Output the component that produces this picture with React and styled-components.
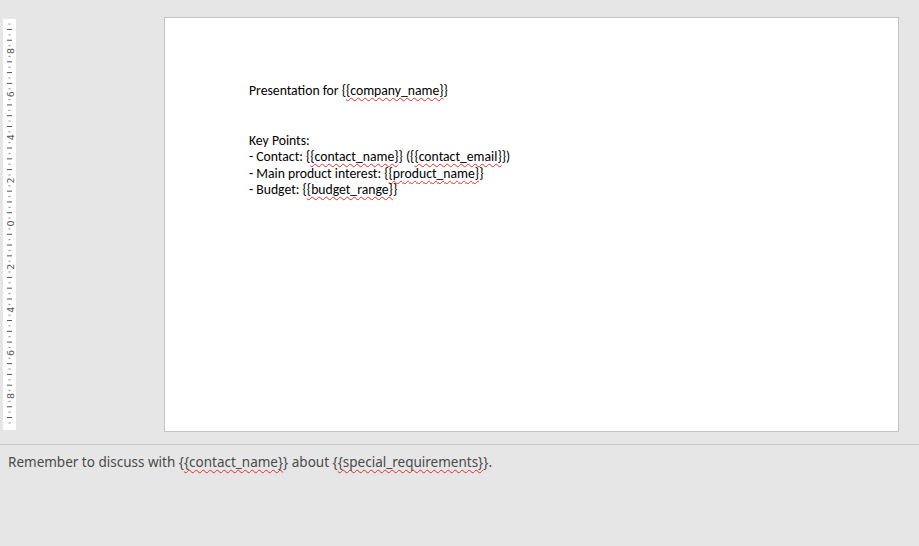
import React from 'react';
import styled, { createGlobalStyle } from 'styled-components';

const GlobalStyle = createGlobalStyle`
  html, body {
    margin: 0;
    padding: 0;
    background: #e6e6e6;
  }
  #root {
    width: 919px;
    height: 546px;
    overflow: hidden;
  }
`;

const Window = styled.div`
  display: flex;
  flex-direction: column;
  width: 919px;
  height: 546px;
  background: #e6e6e6;
`;

const EditorPane = styled.div`
  display: flex;
  align-items: flex-start;
  height: 445px;
  border-bottom: 1px solid #c8c8c8;
  box-sizing: border-box;
`;

const RulerStrip = styled.div`
  margin: 19px 0 0 3px;
  width: 13px;
  height: 411px;
  background: #ffffff;
`;

const SlideArea = styled.div`
  margin: 17px 0 0 148px;
`;

const Slide = styled.div`
  box-sizing: border-box;
  width: 735px;
  height: 415px;
  padding: 65px 0 0 84px;
  background: #ffffff;
  border: 1px solid #c3c3c3;
  font-family: Carlito, Lato, 'Liberation Sans', sans-serif;
  font-size: 13.7px;
  color: #000000;
`;

const SlideLine = styled.div`
  height: 16.5px;
  line-height: 16.5px;
  white-space: pre;
`;

const Misspelled = styled.span`
  text-decoration: underline wavy #e03030;
  text-decoration-thickness: 1px;
  text-underline-offset: 2px;
  text-decoration-skip-ink: none;
`;

const NotesPane = styled.div`
  flex: 1;
  padding: 7px 0 0 8px;
  font-family: 'Noto Sans', 'Open Sans', sans-serif;
  font-size: 13.5px;
  line-height: 20px;
  color: #4a4a4a;
`;

const RULER_CENTER = 204.5;
const RULER_STEP = 5.39;

const Ruler = () => {
  const marks = [];
  for (let i = -37; i <= 37; i++) {
    const y = RULER_CENTER + i * RULER_STEP;
    if (i % 8 === 0) {
      marks.push(
        <text
          key={i}
          x={0}
          y={0}
          transform={`translate(7.5 ${y}) rotate(-90)`}
          textAnchor="middle"
          dominantBaseline="central"
          fontFamily="'DejaVu Sans', sans-serif"
          fontSize="9.5"
          fill="#555555"
        >
          {Math.abs(i) / 4}
        </text>
      );
    } else if (i % 2 === 0) {
      marks.push(<rect key={i} x={4} y={y - 0.5} width={5} height={1} fill="#555555" />);
    } else {
      marks.push(<rect key={i} x={5.5} y={y - 0.5} width={2} height={1} fill="#8a8a8a" />);
    }
  }
  return (
    <RulerStrip>
      <svg width="13" height="411" viewBox="0 0 13 411">
        {marks}
      </svg>
    </RulerStrip>
  );
};

const Placeholder = ({ name }) => (
  <>
    {'{'}
    <Misspelled>{`{${name}}`}</Misspelled>
    {'}'}
  </>
);

export default function App() {
  return (
    <>
      <GlobalStyle />
      <Window>
        <EditorPane>
          <Ruler />
          <SlideArea>
            <Slide>
              <SlideLine>
                Presentation for <Placeholder name="company_name" />
              </SlideLine>
              <SlideLine> </SlideLine>
              <SlideLine> </SlideLine>
              <SlideLine>Key Points:</SlideLine>
              <SlideLine>
                - Contact: <Placeholder name="contact_name" /> ({'{'}
                <Misspelled>{'{contact_email}'}</Misspelled>
                {'}'})
              </SlideLine>
              <SlideLine>
                - Main product interest: <Placeholder name="product_name" />
              </SlideLine>
              <SlideLine>
                - Budget: <Placeholder name="budget_range" />
              </SlideLine>
            </Slide>
          </SlideArea>
        </EditorPane>
        <NotesPane>
          Remember to discuss with <Placeholder name="contact_name" /> about{' '}
          <Placeholder name="special_requirements" />.
        </NotesPane>
      </Window>
    </>
  );
}
